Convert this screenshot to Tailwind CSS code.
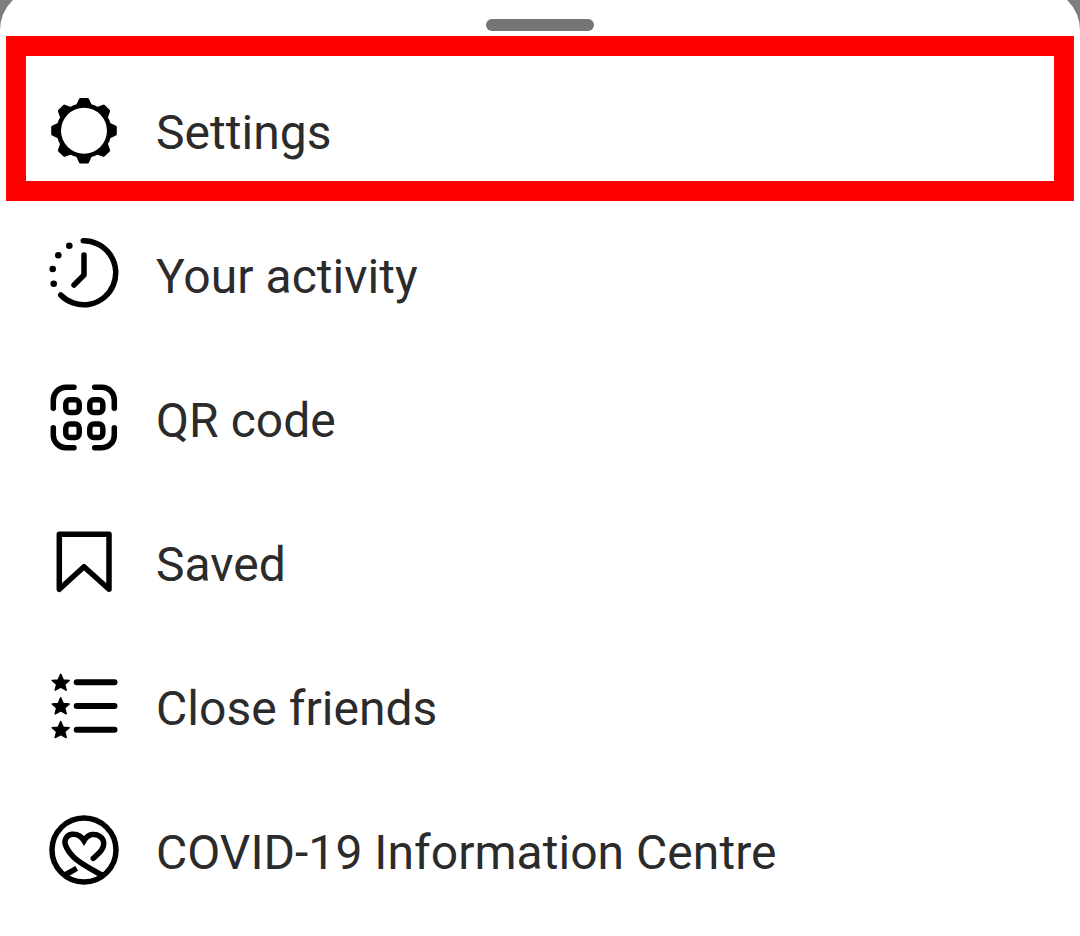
<!DOCTYPE html>
<html>
<head>
<meta charset="utf-8">
<title>Menu</title>
<script src="https://cdn.jsdelivr.net/npm/@tailwindcss/browser@4"></script>
</head>
<body class="bg-[#7f7f7f] h-[936px] overflow-hidden">
<div class="relative w-[1080px] h-[947px] -mt-[11px] bg-white rounded-t-[41px] font-['Roboto',sans-serif] text-[#2b2b2b] tracking-[0.04px]">
  <!-- drag handle -->
  <div class="h-[71px] flex justify-center pt-[30px]">
    <div class="w-[108px] h-[12px] rounded-full bg-[#757575]"></div>
  </div>

  <!-- menu rows -->
  <div class="flex flex-col">
    <div class="h-[144px] flex items-center pl-[44px]">
      <svg class="w-[80px] h-[80px]" viewBox="0 0 80 80" fill="#000" stroke="#000" stroke-width="3" stroke-linejoin="round">
        <g transform="translate(40 38.7)">
          <circle r="27.500" stroke="none"/>
          <path d="M-6-26-3.500-31.300H3.500L6-26Z"/>
          <path d="M-6-26-3.500-31.300H3.500L6-26Z" transform="rotate(45)"/>
          <path d="M-6-26-3.500-31.300H3.500L6-26Z" transform="rotate(90)"/>
          <path d="M-6-26-3.500-31.300H3.500L6-26Z" transform="rotate(135)"/>
          <path d="M-6-26-3.500-31.300H3.500L6-26Z" transform="rotate(180)"/>
          <path d="M-6-26-3.500-31.300H3.500L6-26Z" transform="rotate(225)"/>
          <path d="M-6-26-3.500-31.300H3.500L6-26Z" transform="rotate(270)"/>
          <path d="M-6-26-3.500-31.300H3.500L6-26Z" transform="rotate(315)"/>
          <circle r="23" fill="#fff" stroke="none"/>
        </g>
      </svg>
      <span class="ml-[32px] text-[48px] leading-none pt-[2px]">Settings</span>
    </div>

    <div class="h-[144px] flex items-center pl-[44px]">
      <svg class="w-[80px] h-[80px]" viewBox="0 0 80 80" fill="none" stroke="#000" stroke-width="5.500" stroke-linecap="round" stroke-linejoin="round">
        <path d="M39.300 4.800A32 32 0 1 1 16.700 59"/>
        <path d="M40 19V39L30 49"/>
        <g fill="#000" stroke="none">
          <circle cx="25.300" cy="9.700" r="3.300"/>
          <circle cx="14.300" cy="19.300" r="3.300"/>
          <circle cx="8.700" cy="33" r="3.300"/>
          <circle cx="9.700" cy="47.700" r="3.300"/>
        </g>
      </svg>
      <span class="ml-[32px] text-[48px] leading-none pt-[2px]">Your activity</span>
    </div>

    <div class="h-[144px] flex items-center pl-[44px]">
      <svg class="w-[80px] h-[80px]" viewBox="0 0 80 80" fill="none" stroke="#000" stroke-width="5.500" stroke-linecap="round" stroke-linejoin="round">
        <path d="M9.300 28.300V20A12.700 12.700 0 0 1 22 7.300H30"/>
        <path d="M50.700 7.300H58A12.300 12.300 0 0 1 70.300 20V28.300"/>
        <path d="M9.300 47.700V55A12.700 12.700 0 0 0 22 67.700H30"/>
        <path d="M50.700 67.700H58A12.300 12.300 0 0 0 70.300 55V47.700"/>
        <rect x="21.800" y="19.800" width="13.400" height="12.700" rx="4"/>
        <rect x="45.800" y="19.800" width="13" height="12.700" rx="4"/>
        <rect x="21.800" y="44" width="13.400" height="13.500" rx="4"/>
        <rect x="45.800" y="44" width="13" height="13.500" rx="4"/>
      </svg>
      <span class="ml-[32px] text-[48px] leading-none pt-[2px]">QR code</span>
    </div>

    <div class="h-[144px] flex items-center pl-[44px]">
      <svg class="w-[80px] h-[80px]" viewBox="0 0 80 80" fill="none" stroke="#000" stroke-width="5.500" stroke-linejoin="round" stroke-linecap="round">
        <path d="M15.300 65.300V10.300H65V65.300L40 42.700Z"/>
      </svg>
      <span class="ml-[32px] text-[48px] leading-none pt-[2px]">Saved</span>
    </div>

    <div class="h-[144px] flex items-center pl-[44px]">
      <svg class="w-[80px] h-[80px]" viewBox="0 0 80 80" fill="#000" stroke="#000" stroke-linejoin="round" stroke-linecap="round">
        <g stroke-width="6" fill="none">
          <path d="M32.700 14.300H70.500"/>
          <path d="M32.700 38H70.500"/>
          <path d="M32.700 61.700H70.500"/>
        </g>
        <g stroke-width="1.500">
          <path transform="translate(16.700 14.700)" d="M0-8.500 2.500-2.800 8.500-2.300 4 1.700 5.500 7.500 0 4.500 -5.500 7.500 -4 1.700 -8.500-2.300 -2.500-2.800Z"/>
          <path transform="translate(16.700 38.300)" d="M0-8.500 2.500-2.800 8.500-2.300 4 1.700 5.500 7.500 0 4.500 -5.500 7.500 -4 1.700 -8.500-2.300 -2.500-2.800Z"/>
          <path transform="translate(16.700 62)" d="M0-8.500 2.500-2.800 8.500-2.300 4 1.700 5.500 7.500 0 4.500 -5.500 7.500 -4 1.700 -8.500-2.300 -2.500-2.800Z"/>
        </g>
      </svg>
      <span class="ml-[32px] text-[48px] leading-none pt-[2px]">Close friends</span>
    </div>

    <div class="h-[144px] flex items-center pl-[44px]">
      <svg class="w-[80px] h-[80px]" viewBox="0 0 80 80" fill="none" stroke="#000" stroke-width="5.500">
        <circle cx="40" cy="38" r="32"/>
        <path stroke-linecap="round" d="M49.300 46.300C55 41 60 37 59.800 31C59.500 25.500 54 21.800 48 22.600C44.500 23 42 25.500 40 28.700C37.500 24.500 33 21.800 28 22.300C22.500 23 19.800 28 21.500 33C23 37.500 26 41.500 30 45.500C36 51.500 47 57 57.700 63"/>
        <path d="M21 63 32.700 56.300"/>
      </svg>
      <span class="ml-[32px] text-[48px] leading-none pt-[2px]">COVID-19 Information Centre</span>
    </div>
  </div>

  <!-- red highlight annotation -->
  <div class="absolute left-[6px] top-[47px] w-[1068px] h-[165px] border-[20px] border-[#ff0000]"></div>
</div>
</body>
</html>
